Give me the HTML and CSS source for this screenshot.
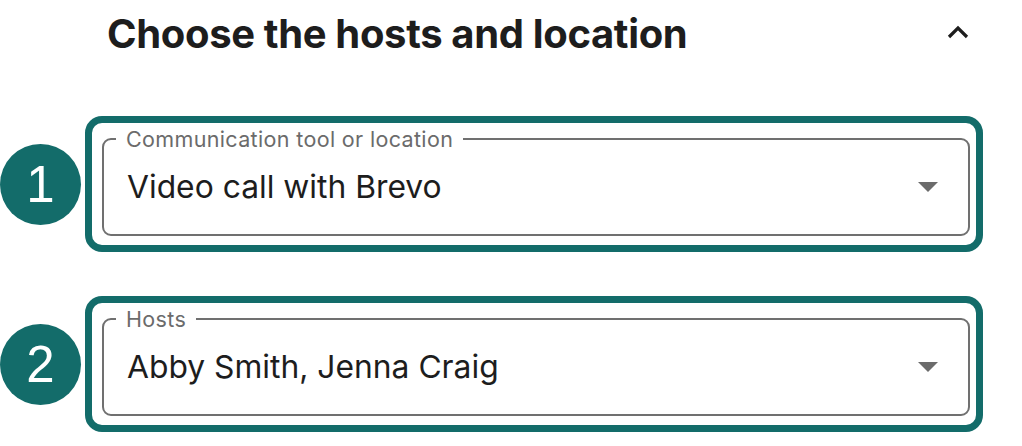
FILE: index.html
```html
<!DOCTYPE html>
<html>
  <head>
    <title>Choose the hosts and location</title>
    <link rel="stylesheet" href="styles.css">
  </head>
  <body>
    <div class="panel">

      <!-- section header with collapse toggle -->
      <div class="panel-head">
        <h2>Choose the hosts and location</h2>
        <svg class="chevron" width="24" height="16" viewBox="0 0 24 16">
          <polyline points="3,13 12,4 21,13" />
        </svg>
      </div>

      <!-- step 1: location -->
      <div class="step">
        <div class="step-num">1</div>
        <div class="step-box">
          <fieldset class="field">
            <legend>Communication tool or location</legend>
            <span class="value">Video call with Brevo</span>
            <svg class="caret" width="20" height="10" viewBox="0 0 20 10">
              <polygon points="0,0 20,0 10,10" />
            </svg>
          </fieldset>
        </div>
      </div>

      <!-- step 2: hosts -->
      <div class="step">
        <div class="step-num">2</div>
        <div class="step-box">
          <fieldset class="field">
            <legend>Hosts</legend>
            <span class="value">Abby Smith, Jenna Craig</span>
            <svg class="caret" width="20" height="10" viewBox="0 0 20 10">
              <polygon points="0,0 20,0 10,10" />
            </svg>
          </fieldset>
        </div>
      </div>

    </div>
  </body>
</html>
```

FILE: styles.css
```css
body {
  margin: 0;
  font-family: Inter, "Liberation Sans", sans-serif;
  background-color: #fff;
  color: #1d1d1d;
}

.panel {
  width: 983px;
}

.panel-head {
  display: flex;
  align-items: center;
  justify-content: space-between;
  height: 48px;
  margin-top: 10px;
  margin-bottom: 58px;
  padding-left: 107px;
}

.panel-head h2 {
  margin: 0;
  font-size: 40px;
  font-weight: 700;
  line-height: 48px;
  letter-spacing: -0.35px;
  color: #1d1d1d;
}

.chevron {
  margin-right: 13px;
  margin-top: -4px;
}

.chevron polyline {
  fill: none;
  stroke: #1d1d1d;
  stroke-width: 3.2;
}

.step {
  display: flex;
  align-items: center;
  gap: 4px;
}

.step + .step {
  margin-top: 44px;
}

.step-num {
  width: 81px;
  height: 81px;
  border-radius: 50%;
  background-color: #136c6a;
  color: #fff;
  font-family: "Liberation Sans", Arial, sans-serif;
  font-size: 51px;
  line-height: 81px;
  text-align: center;
}

.step-box {
  flex: 1;
  border: 7px solid #136c6a;
  border-radius: 17px;
  padding: 4px 6px 9px 10px;
}

.field {
  display: flex;
  align-items: center;
  justify-content: space-between;
  margin: 0;
  min-width: 0;
  border: 2px solid #707070;
  border-radius: 9px;
  padding: 16px 30px 27px 23px;
}

.field legend {
  margin-left: -11px;
  padding: 0 10px;
  font-size: 21.5px;
  line-height: 24px;
  letter-spacing: 0.35px;
  color: #6b6b6b;
}

.value {
  font-size: 31.8px;
  line-height: 40px;
  color: #1d1d1d;
}

.caret polygon {
  fill: #6b6b6b;
}
```
